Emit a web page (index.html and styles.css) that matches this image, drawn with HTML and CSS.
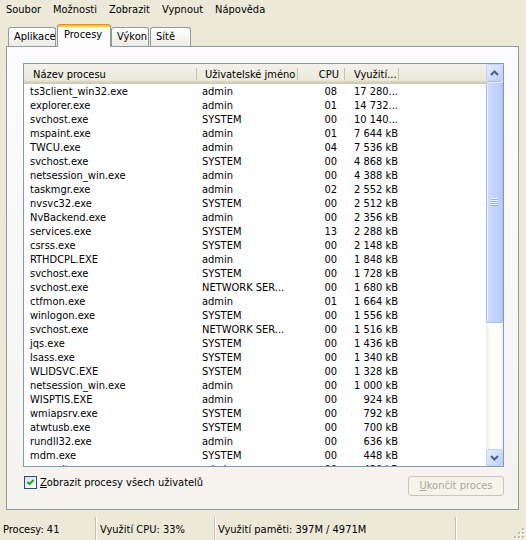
FILE: index.html
```html
<!DOCTYPE html>
<html lang="cs">
<head>
<meta charset="utf-8">
<title>Správce úloh</title>
<link rel="stylesheet" href="styles.css">
</head>
<body>
<div class="menubar">
  <span>Soubor</span><span>Možnosti</span><span>Zobrazit</span><span>Vypnout</span><span>Nápověda</span>
</div>
<div class="tabs">
  <div class="tab t1">Aplikace</div>
  <div class="tab t2 active">Procesy</div>
  <div class="tab t3">Výkon</div>
  <div class="tab t4">Sítě</div>
</div>
<div class="panel">
  <div class="list">
    <div class="list-main">
      <div class="hdr">
        <div class="hc c-name">Název procesu</div>
        <div class="hc c-user">Uživatelské jméno</div>
        <div class="hc c-cpu">CPU</div>
        <div class="hc c-mem">Využití...</div>
        <div class="hc c-rest"></div>
      </div>
      <div class="rows">
        <div class="row"><span class="c-name">ts3client_win32.exe</span><span class="c-user">admin</span><span class="c-cpu">08</span><span class="c-mem">17 280...</span></div>
        <div class="row"><span class="c-name">explorer.exe</span><span class="c-user">admin</span><span class="c-cpu">01</span><span class="c-mem">14 732...</span></div>
        <div class="row"><span class="c-name">svchost.exe</span><span class="c-user">SYSTEM</span><span class="c-cpu">00</span><span class="c-mem">10 140...</span></div>
        <div class="row"><span class="c-name">mspaint.exe</span><span class="c-user">admin</span><span class="c-cpu">01</span><span class="c-mem">7 644 kB</span></div>
        <div class="row"><span class="c-name">TWCU.exe</span><span class="c-user">admin</span><span class="c-cpu">04</span><span class="c-mem">7 536 kB</span></div>
        <div class="row"><span class="c-name">svchost.exe</span><span class="c-user">SYSTEM</span><span class="c-cpu">00</span><span class="c-mem">4 868 kB</span></div>
        <div class="row"><span class="c-name">netsession_win.exe</span><span class="c-user">admin</span><span class="c-cpu">00</span><span class="c-mem">4 388 kB</span></div>
        <div class="row"><span class="c-name">taskmgr.exe</span><span class="c-user">admin</span><span class="c-cpu">02</span><span class="c-mem">2 552 kB</span></div>
        <div class="row"><span class="c-name">nvsvc32.exe</span><span class="c-user">SYSTEM</span><span class="c-cpu">00</span><span class="c-mem">2 512 kB</span></div>
        <div class="row"><span class="c-name">NvBackend.exe</span><span class="c-user">admin</span><span class="c-cpu">00</span><span class="c-mem">2 356 kB</span></div>
        <div class="row"><span class="c-name">services.exe</span><span class="c-user">SYSTEM</span><span class="c-cpu">13</span><span class="c-mem">2 288 kB</span></div>
        <div class="row"><span class="c-name">csrss.exe</span><span class="c-user">SYSTEM</span><span class="c-cpu">00</span><span class="c-mem">2 148 kB</span></div>
        <div class="row"><span class="c-name">RTHDCPL.EXE</span><span class="c-user">admin</span><span class="c-cpu">00</span><span class="c-mem">1 848 kB</span></div>
        <div class="row"><span class="c-name">svchost.exe</span><span class="c-user">SYSTEM</span><span class="c-cpu">00</span><span class="c-mem">1 728 kB</span></div>
        <div class="row"><span class="c-name">svchost.exe</span><span class="c-user">NETWORK SER...</span><span class="c-cpu">00</span><span class="c-mem">1 680 kB</span></div>
        <div class="row"><span class="c-name">ctfmon.exe</span><span class="c-user">admin</span><span class="c-cpu">01</span><span class="c-mem">1 664 kB</span></div>
        <div class="row"><span class="c-name">winlogon.exe</span><span class="c-user">SYSTEM</span><span class="c-cpu">00</span><span class="c-mem">1 556 kB</span></div>
        <div class="row"><span class="c-name">svchost.exe</span><span class="c-user">NETWORK SER...</span><span class="c-cpu">00</span><span class="c-mem">1 516 kB</span></div>
        <div class="row"><span class="c-name">jqs.exe</span><span class="c-user">SYSTEM</span><span class="c-cpu">00</span><span class="c-mem">1 436 kB</span></div>
        <div class="row"><span class="c-name">lsass.exe</span><span class="c-user">SYSTEM</span><span class="c-cpu">00</span><span class="c-mem">1 340 kB</span></div>
        <div class="row"><span class="c-name">WLIDSVC.EXE</span><span class="c-user">SYSTEM</span><span class="c-cpu">00</span><span class="c-mem">1 328 kB</span></div>
        <div class="row"><span class="c-name">netsession_win.exe</span><span class="c-user">admin</span><span class="c-cpu">00</span><span class="c-mem">1 000 kB</span></div>
        <div class="row"><span class="c-name">WISPTIS.EXE</span><span class="c-user">admin</span><span class="c-cpu">00</span><span class="c-mem">924 kB</span></div>
        <div class="row"><span class="c-name">wmiapsrv.exe</span><span class="c-user">SYSTEM</span><span class="c-cpu">00</span><span class="c-mem">792 kB</span></div>
        <div class="row"><span class="c-name">atwtusb.exe</span><span class="c-user">SYSTEM</span><span class="c-cpu">00</span><span class="c-mem">700 kB</span></div>
        <div class="row"><span class="c-name">rundll32.exe</span><span class="c-user">admin</span><span class="c-cpu">00</span><span class="c-mem">636 kB</span></div>
        <div class="row"><span class="c-name">mdm.exe</span><span class="c-user">SYSTEM</span><span class="c-cpu">00</span><span class="c-mem">448 kB</span></div>
        <div class="row"><span class="c-name">wuauclt.exe</span><span class="c-user">admin</span><span class="c-cpu">00</span><span class="c-mem">420 kB</span></div>
      </div>
    </div>
    <div class="vscroll">
      <div class="sb-btn"><svg width="9" height="6" viewBox="0 0 9 6"><path d="M1 5 L4.5 1.5 L8 5" fill="none" stroke="#4d6185" stroke-width="2"/></svg></div>
      <div class="thumb"><div class="grip"></div></div>
      <div class="track"></div>
      <div class="sb-btn"><svg width="9" height="6" viewBox="0 0 9 6"><path d="M1 1 L4.5 4.5 L8 1" fill="none" stroke="#4d6185" stroke-width="2"/></svg></div>
    </div>
  </div>
  <div class="bottom">
    <div class="chk">
      <span class="box"><svg width="11" height="11" viewBox="0 0 11 11"><path d="M2.5 5 L4.5 7 L8.5 3" fill="none" stroke="#21a121" stroke-width="2"/></svg></span>
      <span class="chk-label"><u>Z</u>obrazit procesy všech uživatelů</span>
    </div>
    <div class="btn"><u>U</u>končit proces</div>
  </div>
</div>
<div class="status">
  <div class="pane p1">Procesy: 41</div>
  <div class="pane p2">Využití CPU: 33%</div>
  <div class="pane p3">Využití paměti: 397M / 4971M</div>
  <div class="pane p4">
    <svg class="gripper" width="12" height="12" viewBox="0 0 12 12">
      <g fill="#fff"><rect x="10" y="2" width="2" height="2"/><rect x="10" y="6" width="2" height="2"/><rect x="10" y="10" width="2" height="2"/><rect x="6" y="6" width="2" height="2"/><rect x="6" y="10" width="2" height="2"/><rect x="2" y="10" width="2" height="2"/></g>
      <g fill="#c1bca5"><rect x="9" y="1" width="2" height="2"/><rect x="9" y="5" width="2" height="2"/><rect x="9" y="9" width="2" height="2"/><rect x="5" y="5" width="2" height="2"/><rect x="5" y="9" width="2" height="2"/><rect x="1" y="9" width="2" height="2"/></g>
    </svg>
  </div>
</div>
</body>
</html>
```

FILE: styles.css
```css
* { box-sizing: border-box; margin: 0; padding: 0; }
html, body { width: 526px; height: 540px; overflow: hidden; }
body {
  background: #ece9d8;
  font-family: "DejaVu Sans Condensed", "DejaVu Sans", sans-serif;
  font-stretch: condensed;
  font-size: 11px;
  color: #000;
}

/* menu */
.menubar { height: 20px; display: flex; line-height: 20px; }
.menubar span { padding: 0 6px; }

/* tabs */
.tabs { display: flex; align-items: flex-end; height: 22px; margin-top: 4px; padding-left: 8px; }
.tab {
  height: 19px;
  border: 1px solid #919b9c;
  border-bottom: 0;
  border-radius: 3px 3px 0 0;
  background: linear-gradient(#ffffff, #ecebe6);
  padding-left: 5px;
  line-height: 18px;
  white-space: nowrap;
}
.t1 { width: 48px; }
.t2 { width: 54px; margin-left: 1px; }
.t3 { width: 38px; }
.t4 { width: 41px; margin-left: 1px; }
.tab.active {
  height: 23px;
  margin-bottom: -1px;
  border-top: 1px solid #e68b2c;
  background: linear-gradient(#ffc73c 0, #ffc73c 2px, #fcfcfe 2px, #fcfcfe 100%);
  padding-left: 6px;
  padding-top: 3px;
  line-height: 14px;
  position: relative;
  z-index: 1;
}

/* panel */
.panel {
  margin-left: 6px;
  width: 513px;
  height: 464px;
  border: 1px solid #919b9c;
  background: linear-gradient(#fcfcfe, #f4f3ee);
  padding: 16px 14px 13px 16px;
  display: flex;
  flex-direction: column;
}

/* list view */
.list { width: 481px; height: 404px; border: 1px solid #7f9db9; background: #fff; display: flex; }
.list-main { width: 462px; overflow: hidden; }
.hdr {
  display: flex;
  height: 20px;
  background: linear-gradient(#f3f2ea 0, #ebeadb 16px, #e2dec6 17px, #d6d2c2 18px, #cbc7b8 20px);
}
.hc {
  height: 20px;
  padding-top: 3px;
  line-height: 16px;
  white-space: nowrap;
  overflow: hidden;
  background: linear-gradient(#c7c5b2, #c7c5b2) right 4px / 1px 12px no-repeat;
}
.hc.c-name { width: 173px; padding-left: 9px; }
.hc.c-user { width: 101px; padding-left: 8px; }
.hc.c-cpu { width: 47px; text-align: right; padding-right: 6px; }
.hc.c-mem { width: 54px; padding-left: 9px; }
.hc.c-rest { flex: 1; background: none; }

.rows { height: 382px; padding-top: 1px; overflow: hidden; }
.row { display: flex; height: 14px; line-height: 14px; white-space: nowrap; }
.row span { display: block; overflow: hidden; }
.row .c-name { width: 173px; padding-left: 6px; }
.row .c-user { width: 101px; padding-left: 5px; }
.row .c-cpu { width: 47px; text-align: right; padding-right: 8px; }
.row .c-mem { width: 54px; text-align: right; padding-right: 1px; }

/* scrollbar */
.vscroll {
  width: 17px;
  display: flex;
  flex-direction: column;
  background: linear-gradient(90deg, #eeede5, #fdfdfa 25%, #fdfdfa 75%, #f3f1ec);
}
.sb-btn {
  width: 17px;
  height: 17px;
  flex: none;
  border: 1px solid #c3d3fd;
  border-radius: 2px;
  background: linear-gradient(135deg, #e6eefc, #bdd0fa);
  display: flex;
  align-items: center;
  justify-content: center;
}
.thumb {
  height: 242px;
  flex: none;
  border: 1px solid #a9bfee;
  border-radius: 2px;
  background: linear-gradient(90deg, #d0dcfc, #c3d3fb 50%, #b8cbf8);
  box-shadow: inset 1px 1px 0 #e8effe;
  display: flex;
  align-items: center;
  justify-content: center;
}
.grip {
  width: 7px;
  height: 8px;
  background: repeating-linear-gradient(#eef4fe 0, #eef4fe 1px, #8cb0f8 1px, #8cb0f8 2px);
}
.track { flex: 1; }

/* bottom row */
.bottom { margin-top: 9px; height: 20px; width: 481px; display: flex; justify-content: space-between; align-items: flex-start; }
.chk { display: flex; align-items: center; height: 13px; margin-left: 1px; }
.box {
  width: 13px;
  height: 13px;
  border: 1px solid #1c5180;
  background: linear-gradient(135deg, #dcdcd7, #ffffff);
  display: flex;
  align-items: center;
  justify-content: center;
}
.chk-label { margin-left: 3px; line-height: 13px; white-space: nowrap; }
.btn {
  width: 96px;
  height: 20px;
  border: 1px solid #c9c7ba;
  border-radius: 3px;
  background: #f5f4ea;
  color: #aca899;
  text-align: center;
  line-height: 18px;
}

/* status bar */
.status { margin-top: 7px; height: 23px; display: flex; }
.pane {
  height: 23px;
  padding-top: 4px;
  line-height: 18px;
  white-space: nowrap;
  border-right: 1px solid #c5c2b2;
  box-shadow: 1px 0 0 #fff;
}
.p1 { width: 96px; padding-left: 3px; }
.p2 { width: 119px; padding-left: 4px; }
.p3 { width: 241px; padding-left: 3px; }
.p4 { flex: 1; border-right: 0; box-shadow: none; display: flex; justify-content: flex-end; align-items: flex-end; padding: 0 1px 1px 0; }
```
